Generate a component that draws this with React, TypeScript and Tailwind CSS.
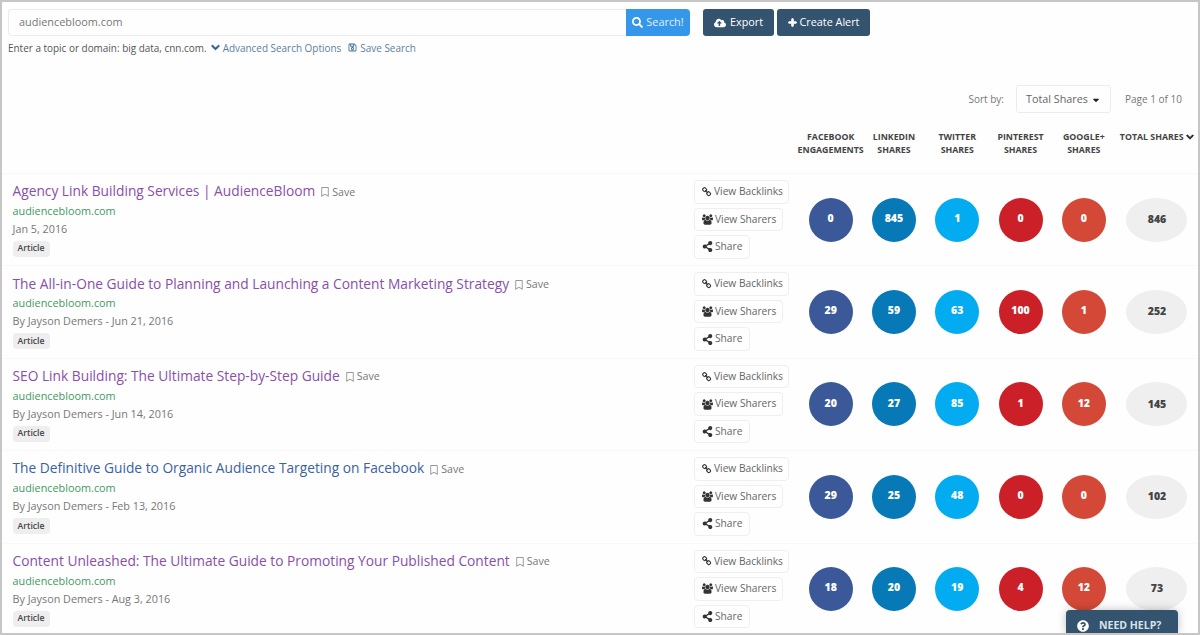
import {
  FaChevronDown,
  FaCloudUploadAlt,
  FaCaretDown,
  FaPlus,
  FaQuestionCircle,
  FaRegBookmark,
  FaRegSave,
  FaSearch,
  FaShareAlt,
} from "react-icons/fa";

type Result = {
  title: string
  visited: boolean
  byline: string
  shares: number[]
  total: number
}

const results: Result[] = [
  { title: "Agency Link Building Services | AudienceBloom", visited: true, byline: "Jan 5, 2016", shares: [0, 845, 1, 0, 0], total: 846 },
  { title: "The All-in-One Guide to Planning and Launching a Content Marketing Strategy", visited: true, byline: "By Jayson Demers - Jun 21, 2016", shares: [29, 59, 63, 100, 1], total: 252 },
  { title: "SEO Link Building: The Ultimate Step-by-Step Guide", visited: true, byline: "By Jayson Demers - Jun 14, 2016", shares: [20, 27, 85, 1, 12], total: 145 },
  { title: "The Definitive Guide to Organic Audience Targeting on Facebook", visited: false, byline: "By Jayson Demers - Feb 13, 2016", shares: [29, 25, 48, 0, 0], total: 102 },
  { title: "Content Unleashed: The Ultimate Guide to Promoting Your Published Content", visited: true, byline: "By Jayson Demers - Aug 3, 2016", shares: [18, 20, 19, 4, 12], total: 73 },
]

const networks = [
  { name: "Facebook", metric: "Engagements", color: "bg-[#3b5998]" },
  { name: "LinkedIn", metric: "Shares", color: "bg-[#0679b6]" },
  { name: "Twitter", metric: "Shares", color: "bg-[#03abf0]" },
  { name: "Pinterest", metric: "Shares", color: "bg-[#cb2027]" },
  { name: "Google+", metric: "Shares", color: "bg-[#d34836]" },
]

export default function App() {
  return (
    <div className="relative h-[635px] w-[1200px] overflow-hidden border-2 border-[#c6c6c6] bg-[#fefefe] font-['Open_Sans',sans-serif] text-[#666]">
      <SearchBar />
      <SortBar />
      <TableHead />
      <div>
        {results.map((result) => <ResultRow key={result.title} result={result} />)}
      </div>
      <button className="absolute bottom-0 left-[1064px] flex h-[23px] w-28 items-center gap-[10px] rounded-t-sm bg-[#33536e] pl-[11px] pt-[9px] text-[10.5px] font-bold text-[#d9e2ea] shadow-[0_0_8px_rgba(0,0,0,0.25)]">
        <FaQuestionCircle className="size-3 shrink-0 text-white" />
        <span className="whitespace-nowrap">NEED HELP?</span>
      </button>
    </div>
  )
}

function SearchBar() {
  return (
    <div className="h-[82px] pl-[6px] pt-[7px]">
      <div className="flex h-[27px]">
        <div className="flex w-[618px] items-center rounded-l-sm border border-r-0 border-[#ececec] pl-[10px] text-[10.9px] text-[#777]">
          audiencebloom.com
        </div>
        <button className="flex w-16 items-center justify-center gap-[3px] rounded-r-sm bg-[#3597ea] text-[10.9px] text-[#e4f1fd]">
          <FaSearch className="size-[11px] text-white" />
          Search!
        </button>
        <button className="ml-[13px] flex w-[71px] items-center justify-center gap-1 rounded-[3px] bg-[#33536e] text-[10.8px] text-white">
          <FaCloudUploadAlt className="size-3" />
          Export
        </button>
        <button className="ml-[3px] flex w-[93px] items-center justify-center gap-[3px] rounded-[3px] bg-[#33536e] text-[10.8px] text-white">
          <FaPlus className="size-[9px] stroke-white stroke-[50]" />
          Create Alert
        </button>
      </div>
      <div className="mt-[4px] flex h-4 items-center whitespace-nowrap text-[9.95px] text-[#555]">
        <span>Enter a topic or domain: big data, cnn.com.</span>
        <a className="ml-1 flex items-center gap-[3px] text-[#5b7f9f]">
          <FaChevronDown className="size-[9px] stroke-[#2a5f92] stroke-[50] text-[#2a5f92]" />
          Advanced Search Options
        </a>
        <a className="ml-[7px] flex items-center gap-[3px] text-[#5b7f9f]">
          <FaRegSave className="size-[9px] text-[#416d93]" />
          Save Search
        </a>
      </div>
    </div>
  )
}

function SortBar() {
  return (
    <div className="flex h-[30px] items-center justify-end pr-[13px] text-[10px] text-[#777]">
      <span>Sort by:</span>
      <button className="ml-[12px] flex h-7 w-[95px] items-center justify-center gap-[3px] rounded-[3px] border border-[#ececec] pt-px text-[10.8px] text-[#666]">
        Total Shares
        <FaCaretDown className="size-[10px] text-[#222]" />
      </button>
      <span className="ml-[14px] w-[60px] whitespace-nowrap">Page 1 of 10</span>
    </div>
  )
}

function TableHead() {
  return (
    <div className="flex h-[59px] pl-[797px] pt-[17px] text-center text-[8.8px] font-bold leading-[12.5px] text-[#444] uppercase">
      {networks.map((network) => (
        <div key={network.name} className="flex w-[63.3px] flex-col items-center whitespace-nowrap">
          <span>{network.name}</span>
          <span>{network.metric}</span>
        </div>
      ))}
      <div className="flex h-[12.5px] flex-1 items-center justify-center gap-[2px] whitespace-nowrap">
        Total Shares
        <FaChevronDown className="size-2 stroke-[#222] stroke-[50] text-[#222]" />
      </div>
    </div>
  )
}

function ResultRow({ result }: { result: Result }) {
  return (
    <div className="flex h-[92.4px] border-t border-[#f8f8f8] pl-[10.5px]">
      <div className="w-[681.5px] pt-[7px]">
        <div className="flex h-[21px] items-center whitespace-nowrap">
          <a className={result.visited ? "text-[13.76px] text-[#8a4fa8]" : "text-[13.76px] text-[#3a62a0]"}>{result.title}</a>
          <span className="ml-[5px] flex items-center gap-[2px] pt-[2px] text-[10.6px] text-[#777]">
            <FaRegBookmark className="size-[10px] text-[#999]" />
            Save
          </span>
        </div>
        <div className="h-[18px] text-[10.85px] leading-[18px] text-[#3f9a5f]">audiencebloom.com</div>
        <div className="h-[18px] text-[10.8px] leading-[18px] text-[#777]">{result.byline}</div>
        <span className="mt-[3px] flex h-4 w-[37px] items-center justify-center rounded-sm bg-[#eee] text-[8.7px] font-semibold text-[#444]">Article</span>
      </div>
      <div className="flex w-[105px] flex-col items-start gap-[4px] pt-[6px]">
        <ActionButton icon={<LinkIcon />} label="View Backlinks" width="w-[95px]" />
        <ActionButton icon={<GroupIcon />} label="View Sharers" width="w-[89px]" />
        <ActionButton icon={<FaShareAlt className="size-[11px]" />} label="Share" width="w-[56px]" />
      </div>
      <div className="flex h-full flex-1 items-center">
        {result.shares.map((count, i) => (
          <div key={networks[i].name} className="flex w-[63.3px] justify-center">
            <div className={`flex size-11 items-center justify-center rounded-full pb-[2px] text-[10.5px] font-extrabold text-white ${networks[i].color}`}>
              {count}
            </div>
          </div>
        ))}
        <div className="ml-[11px] flex h-11 w-[61px] items-center justify-center rounded-[50%] bg-[#efefef] text-[10.5px] font-extrabold text-[#444]">
          {result.total}
        </div>
      </div>
    </div>
  )
}

function ActionButton({ icon, label, width }: { icon: React.ReactNode, label: string, width: string }) {
  return (
    <button className={`flex h-[23.5px] items-center gap-[2px] whitespace-nowrap rounded-sm border border-[#efefef] pl-[7px] text-[10.2px] text-[#666] ${width}`}>
      <span className="shrink-0 text-[#333]">{icon}</span>
      {label}
    </button>
  )
}

function LinkIcon() {
  return (
    <svg viewBox="0 0 1792 1792" fill="currentColor" className="size-[10px]">
      <path d="M1456 1216q0-40-28-68l-208-208q-28-28-68-28-42 0-72 32 3 3 19 18.5t21.5 21.5 15 19 13 25.5 3.5 27.5q0 40-28 68t-68 28q-15 0-27.5-3.5t-25.5-13-19-15-21.5-21.5-18.5-19q-33 31-33 73 0 40 28 68l206 207q27 27 68 27 40 0 68-26l147-146q28-28 28-67zm-703-705q0-40-28-68l-206-207q-28-28-68-28-39 0-68 27l-147 146q-28 28-28 67 0 40 28 68l208 208q27 27 68 27 42 0 72-31-3-3-19-18.5t-21.5-21.5-15-19-13-25.5-3.5-27.5q0-40 28-68t68-28q15 0 27.5 3.5t25.5 13 19 15 21.5 21.5 18.5 19q33-31 33-73zm895 705q0 120-85 203l-147 146q-83 83-203 83-121 0-204-85l-206-207q-83-83-83-203 0-123 88-209l-88-88q-86 88-208 88-120 0-204-84l-208-208q-84-84-84-204t85-203l147-146q83-83 203-83 121 0 204 85l206 207q83 83 83 203 0 123-88 209l88 88q86-88 208-88 120 0 204 84l208 208q84 84 84 204z" />
    </svg>
  )
}

function GroupIcon() {
  return (
    <svg viewBox="-64 0 1920 1792" fill="currentColor" className="size-[11px]">
      <path d="M529 896q-162 5-265 128h-134q-82 0-138-40.5t-56-118.5q0-353 124-353 6 0 43.5 21t97.5 42.5 119 21.5q67 0 133-23-5 37-5 66 0 139 81 256zm1071 637q0 120-73 189.5t-194 69.5h-874q-121 0-194-69.5t-73-189.5q0-53 3.5-103.5t14-109 26.5-108.5 43-97.5 62-81 85.5-53.5 111.5-20q10 0 43 21.5t73 48 107 48 135 21.5 135-21.5 107-48 73-48 43-21.5q61 0 111.5 20t85.5 53.5 62 81 43 97.5 26.5 108.5 14 109 3.5 103.5zm-1024-1277q0 106-75 181t-181 75-181-75-75-181 75-181 181-75 181 75 75 181zm704 384q0 159-112.5 271.5t-271.5 112.5-271.5-112.5-112.5-271.5 112.5-271.5 271.5-112.5 271.5 112.5 112.5 271.5zm576 225q0 78-56 118.5t-138 40.5h-134q-103-123-265-128 81-117 81-256 0-29-5-66 66 23 133 23 59 0 119-21.5t97.5-42.5 43.5-21q124 0 124 353zm-128-609q0 106-75 181t-181 75-181-75-75-181 75-181 181-75 181 75 75 181z" />
    </svg>
  )
}
